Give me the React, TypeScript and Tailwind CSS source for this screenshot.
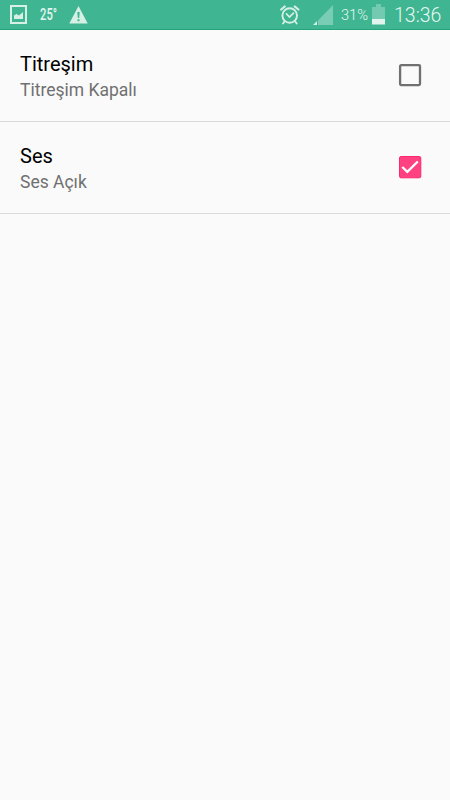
import React from 'react'

const settings = [
  { id: 1, title: 'Titreşim', summary: 'Titreşim Kapalı', checked: false },
  { id: 2, title: 'Ses', summary: 'Ses Açık', checked: true },
]

const PictureIcon = () => (
  <svg width="17" height="19" viewBox="0 0 17 19">
    <path d="M1 1h15v17H1z" fill="none" stroke="#d6f0e6" strokeWidth="2" />
    <path d="M4 14v-3.500L6.500 9l2.500 1.500L13 7v7z" fill="#d6f0e6" />
  </svg>
)

const WarningIcon = () => (
  <svg width="19" height="18" viewBox="0 0 19 18">
    <path d="M9.500 0 18.700 17.500H.3z" fill="#d6f0e6" />
    <path d="M8.300 6h2.400l-.5 6H8.800zM8.500 13.300h2v2h-2z" fill="#3fb592" />
  </svg>
)

const AlarmIcon = () => (
  <svg width="20" height="20" viewBox="0 0 20 20" fill="none" stroke="#d6f0e6" strokeLinecap="round">
    <circle cx="9.700" cy="10.500" r="7.300" strokeWidth="1.900" />
    <path d="M1.200 4.500 4.700 1.500M18.400 4.500 14.800 1.500" strokeWidth="2.200" />
    <path d="M4.500 16.500 3 18.600M15.200 16.500l1.500 2.100" strokeWidth="1.800" />
    <path d="m6.500 8.800 3 3.200 4-3.800" strokeWidth="1.700" />
  </svg>
)

const SignalIcon = () => (
  <svg width="20" height="20" viewBox="0 0 20 20">
    <path d="M5 15.500 20 0v20H5z" fill="#7acdb5" />
    <path d="M0 20l4-4v4z" fill="#d6f0e6" />
  </svg>
)

const BatteryIcon = () => (
  <svg width="13" height="21" viewBox="0 0 13 21">
    <path d="M4 0h5v3h4v12H0V3h4z" fill="#73cab0" />
    <path d="M0 15h13v5.500H0z" fill="#e0f5ed" />
  </svg>
)

const StatusBar = () => {
  return (
    <div className="flex h-[30px] items-start justify-between border-b border-[#24a47d] bg-[#3fb592] pr-2 pl-[10px] text-[#e6f7f1]">
      <div className="flex items-start">
        <div className="pt-[5px]"><PictureIcon /></div>
        <div className="ml-[13px] w-4 pt-[7px]">
          <span className="block origin-left scale-x-[0.680] text-[16.5px] leading-4 font-medium whitespace-nowrap">25°</span>
        </div>
        <div className="ml-[13px] pt-[6px]"><WarningIcon /></div>
      </div>
      <div className="flex items-start">
        <div className="pt-[5px]"><AlarmIcon /></div>
        <div className="ml-[13px] pt-[5px]"><SignalIcon /></div>
        <span className="ml-[8px] w-[28px] pt-[7px] text-[14.6px] leading-4 whitespace-nowrap font-light">31%</span>
        <div className="ml-[3px] pt-[4px]"><BatteryIcon /></div>
        <span className="ml-[9px] w-[48px] pt-[4px] text-[19.5px] leading-6 font-light whitespace-nowrap">13:36</span>
      </div>
    </div>
  )
}

const Checkbox = ({ checked }: { checked: boolean }) => (
  <svg width="24" height="24" viewBox="0 0 24 24">
    {checked ? (
      <>
        <rect x="1.500" y="1.500" width="21.300" height="21.300" rx="1.500" fill="#ff4081" stroke="#fb2870" />
        <path d="m4.300 12 5 4.800L19.800 6.500" fill="none" stroke="#fff" strokeWidth="2.300" />
      </>
    ) : (
      <rect x="2.100" y="2.200" width="19.900" height="19.900" rx="1" fill="none" stroke="#707070" strokeWidth="2.300" />
    )}
  </svg>
)

const App = () => {
  return (
    <div className="min-h-screen w-full bg-[#fafafa] font-['Roboto','Liberation_Sans',sans-serif]">
      <StatusBar />
      {settings.map((item) =>
        <div key={item.id} className="flex h-[92px] items-start justify-between border-b border-[#d9d9d9] pr-[28px] pl-5">
          <div className="pt-[21px]">
            <h2 className="text-[20px] leading-[27px] text-black">{item.title}</h2>
            <p className="text-[17.5px] leading-[25px] text-[#707070]">{item.summary}</p>
          </div>
          <div className="pt-[33px]">
            <Checkbox checked={item.checked} />
          </div>
        </div>
      )}
    </div>
  )
}

export default App
